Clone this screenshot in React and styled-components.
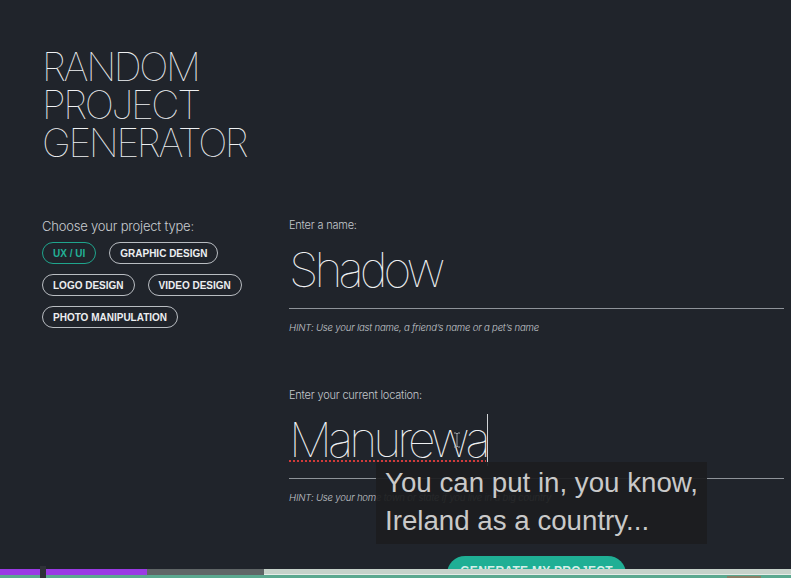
import styled, { createGlobalStyle } from 'styled-components';

const Global = createGlobalStyle`
  html, body { margin: 0; padding: 0; background: #20242b; }
  * { box-sizing: border-box; }
`;

const Screen = styled.div`
  position: relative;
  width: 791px;
  height: 578px;
  overflow: hidden;
  background: #20242b;
  font-family: Inter, Roboto, "Liberation Sans", sans-serif;
  color: #e4e6e8;
`;

const Content = styled.main`
  padding: 48px 7px 0 42px;
`;

const Title = styled.h1`
  margin: 0;
  font-weight: 100;
  font-size: 39px;
  line-height: 38px;
  letter-spacing: -2.4px;
  color: #eef0f2;
`;

const Columns = styled.div`
  display: grid;
  grid-template-columns: 247px 1fr;
  margin-top: 56px;
`;

const Small = styled.div`
  font-size: 13px;
  font-weight: 300;
  color: #c9cdd1;
  letter-spacing: -0.2px;
`;

const Pills = styled.div`
  display: flex;
  flex-wrap: wrap;
  gap: 10px 13px;
  margin-top: 8px;
  width: 230px;
`;

const Pill = styled.button`
  height: 22px;
  padding: 0 10px;
  border-radius: 11px;
  border: 1px solid ${p => (p.$active ? '#1fa58d' : '#b9bdc2')};
  background: transparent;
  color: ${p => (p.$active ? '#22b096' : '#eceef0')};
  font-family: "Liberation Sans", Arial, sans-serif;
  font-weight: 700;
  font-size: 10px;
  cursor: pointer;
`;

const Form = styled.div`
  display: flex;
  flex-direction: column;
`;

const Field = styled.div`
  margin-bottom: ${p => (p.$last ? '53px' : '55px')};
`;

const Label = styled.div`
  font-size: 11px;
  font-weight: 300;
  color: #c3c7cc;
  letter-spacing: -0.2px;
`;

const ValueRow = styled.div`
  display: flex;
  align-items: flex-end;
  height: 77px;
  padding-bottom: 12px;
  border-bottom: 1px solid #8e9399;
`;

const Value = styled.span`
  font-size: 48px;
  font-weight: 100;
  line-height: 52px;
  letter-spacing: -4px;
  color: #eef0f2;
  text-decoration: ${p => (p.$misspelt ? 'underline dotted #d23b3b' : 'none')};
  text-underline-offset: 3px;
  text-decoration-thickness: 2px;
`;

const Caret = styled.span`
  display: inline-block;
  width: 1px;
  height: 52px;
  background: #d0d3d6;
`;

const Hint = styled.div`
  margin-top: 13px;
  font-size: 9.6px;
  font-style: italic;
  font-weight: 300;
  color: #c3c7cc;
  letter-spacing: -0.2px;
`;

const Generate = styled.button`
  align-self: flex-start;
  margin-left: 158px;
  width: 179px;
  height: 36px;
  padding: 0 0 7px;
  border: none;
  border-radius: 18px;
  background: #1faf95;
  color: #d6efe9;
  font-family: "Liberation Sans", Arial, sans-serif;
  font-size: 12px;
  font-weight: 700;
  letter-spacing: 0.3px;
`;

const Subtitle = styled.div`
  position: absolute;
  left: 376px;
  top: 462px;
  width: 331px;
  height: 82px;
  padding: 2px 9px;
  background: rgba(28, 29, 31, 0.93);
  color: #c9c9c9;
  font-family: "Liberation Sans", Arial, sans-serif;
  font-size: 27.7px;
  line-height: 38px;
  white-space: nowrap;
`;

const Pointer = styled.svg`
  position: absolute;
  left: 453px;
  top: 432px;
`;

const Player = styled.div`
  position: absolute;
  left: 0;
  right: 0;
  bottom: 0;
  height: 9px;
`;

const Track = styled.div`
  display: flex;
  height: 6px;
`;

const Segment = styled.div`
  width: ${p => p.$w};
  flex: ${p => (p.$w ? 'none' : 1)};
  background: ${p => p.$c};
  border-bottom: ${p => (p.$line ? `1px solid ${p.$line}` : 'none')};
`;

const Strip = styled.div`
  height: 3px;
  background: #5ba88f;
`;

const Thumb = styled.div`
  position: absolute;
  left: 40px;
  bottom: 0;
  width: 6px;
  height: 12px;
  background: #2f3237;
`;

const Chip = styled.div`
  position: absolute;
  left: 727px;
  bottom: 0;
  width: 34px;
  height: 2px;
  background: #8c7f66;
`;

const types = ['UX / UI', 'GRAPHIC DESIGN', 'LOGO DESIGN', 'VIDEO DESIGN', 'PHOTO MANIPULATION'];

export default function App() {
  return (
    <Screen>
      <Global />
      <Content>
        <Title>RANDOM<br />PROJECT<br />GENERATOR</Title>
        <Columns>
          <div>
            <Small>Choose your project type:</Small>
            <Pills>
              {types.map((t, i) => (
                <Pill key={t} $active={i === 0}>{t}</Pill>
              ))}
            </Pills>
          </div>
          <Form>
            <Field>
              <Label>Enter a name:</Label>
              <ValueRow>
                <Value>Shadow</Value>
              </ValueRow>
              <Hint>HINT: Use your last name, a friend’s name or a pet’s name</Hint>
            </Field>
            <Field $last>
              <Label>Enter your current location:</Label>
              <ValueRow>
                <Value $misspelt>Manurewa</Value>
                <Caret />
              </ValueRow>
              <Hint>HINT: Use your home town or state if you live in a big country</Hint>
            </Field>
            <Generate>GENERATE MY PROJECT</Generate>
          </Form>
        </Columns>
      </Content>

      <Pointer width="8" height="16" viewBox="0 0 8 16">
        <path d="M1 1h2l1 1 1-1h2M4 2v12M1 15h2l1-1 1 1h2" fill="none" stroke="#9da1a6" strokeWidth="1" />
      </Pointer>

      <Subtitle>
        You can put in, you know,<br />Ireland as a country...
      </Subtitle>

      <Player>
        <Track>
          <Segment $w="147px" $c="#9a3ae4" />
          <Segment $w="117px" $c="#5f6566" />
          <Segment $c="#c6d2ca" $line="#e6ece8" />
        </Track>
        <Strip />
        <Chip />
      </Player>
      <Thumb />
    </Screen>
  );
}
